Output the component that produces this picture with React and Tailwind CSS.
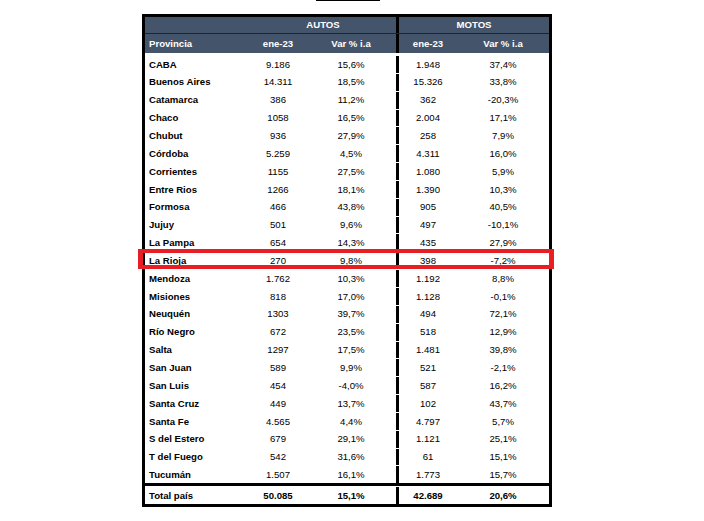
const rows = [
  ["CABA", "9.186", "15,6%", "1.948", "37,4%"],
  ["Buenos Aires", "14.311", "18,5%", "15.326", "33,8%"],
  ["Catamarca", "386", "11,2%", "362", "-20,3%"],
  ["Chaco", "1058", "16,5%", "2.004", "17,1%"],
  ["Chubut", "936", "27,9%", "258", "7,9%"],
  ["Córdoba", "5.259", "4,5%", "4.311", "16,0%"],
  ["Corrientes", "1155", "27,5%", "1.080", "5,9%"],
  ["Entre Rios", "1266", "18,1%", "1.390", "10,3%"],
  ["Formosa", "466", "43,8%", "905", "40,5%"],
  ["Jujuy", "501", "9,6%", "497", "-10,1%"],
  ["La Pampa", "654", "14,3%", "435", "27,9%"],
  ["La Rioja", "270", "9,8%", "398", "-7,2%"],
  ["Mendoza", "1.762", "10,3%", "1.192", "8,8%"],
  ["Misiones", "818", "17,0%", "1.128", "-0,1%"],
  ["Neuquén", "1303", "39,7%", "494", "72,1%"],
  ["Río Negro", "672", "23,5%", "518", "12,9%"],
  ["Salta", "1297", "17,5%", "1.481", "39,8%"],
  ["San Juan", "589", "9,9%", "521", "-2,1%"],
  ["San Luis", "454", "-4,0%", "587", "16,2%"],
  ["Santa Cruz", "449", "13,7%", "102", "43,7%"],
  ["Santa Fe", "4.565", "4,4%", "4.797", "5,7%"],
  ["S del Estero", "679", "29,1%", "1.121", "25,1%"],
  ["T del Fuego", "542", "31,6%", "61", "15,1%"],
  ["Tucumán", "1.507", "16,1%", "1.773", "15,7%"],
];

const Row = ({ r, bold, highlight, tall }) => (
  <div
    className={
      "relative flex items-center pt-px " + (tall ? "h-[17.5px]" : "h-[17.85px]")
    }
  >
    <div className="w-[105px] pl-[4px] font-bold">{r[0]}</div>
    <div className={"w-[56px] text-center " + (bold ? "font-bold" : "")}>
      {r[1]}
    </div>
    <div className={"w-[90px] text-center " + (bold ? "font-bold" : "")}>
      {r[2]}
    </div>
    <div
      className={
        "flex h-full w-[61px] items-center justify-center border-l-[3px] border-black " +
        (bold ? "font-bold" : "")
      }
    >
      {r[3]}
    </div>
    <div className={"w-[92px] text-center " + (bold ? "font-bold" : "")}>
      {r[4]}
    </div>
    {highlight && (
      <div className="absolute -left-[7px] -right-[5px] -top-[2.5px] bottom-0 border-y-[4px] border-x-[5px] border-[#e81e25]" />
    )}
  </div>
);

export default function App() {
  return (
    <div className="h-[521px] w-[704px] bg-white font-['Liberation_Sans',Arial,sans-serif] text-[9.6px] leading-none text-black">
      <div className="ml-[316px] h-px w-[64px] bg-black" />
      <div className="ml-[142px] mt-[13px] w-[410px] border-[3px] border-black">
        <div className="bg-[#44546a] font-bold text-white">
          <div className="flex h-[17px] items-center border-b border-[#1c2430]">
            <div className="w-[105px]" />
            <div className="w-[146px] text-center">AUTOS</div>
            <div className="flex h-full w-[153px] items-center justify-center border-l-[3px] border-black">
              MOTOS
            </div>
          </div>
          <div className="flex h-[19px] items-center">
            <div className="w-[105px] pl-[4px]">Provincia</div>
            <div className="w-[56px] text-center">ene-23</div>
            <div className="w-[90px] text-center">Var % i.a</div>
            <div className="flex h-full w-[61px] items-center justify-center border-l-[3px] border-black">
              ene-23
            </div>
            <div className="w-[92px] text-center">Var % i.a</div>
          </div>
        </div>
        <div className="pt-[2px]">
          {rows.map((r) => (
            <Row key={r[0]} r={r} highlight={r[0] === "La Rioja"} />
          ))}
        </div>
        <div className="border-t-[3px] border-black">
          <Row r={["Total país", "50.085", "15,1%", "42.689", "20,6%"]} bold tall />
        </div>
      </div>
    </div>
  );
}
